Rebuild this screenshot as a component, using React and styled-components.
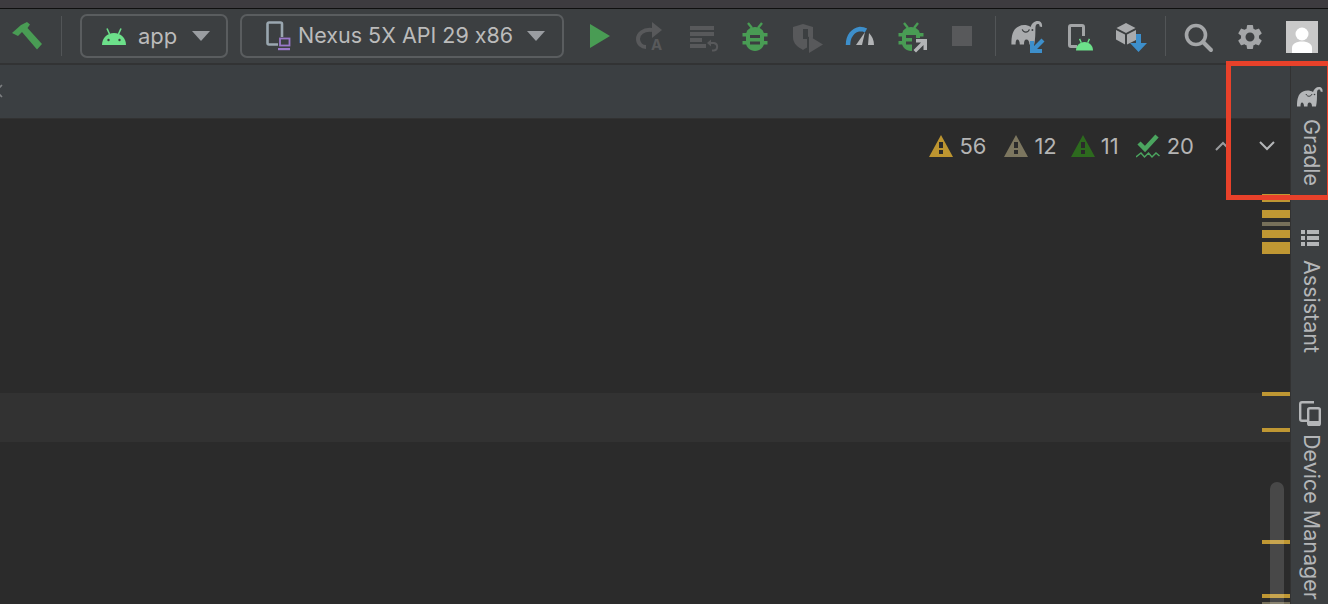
import React from 'react';
import styled, { createGlobalStyle } from 'styled-components';
import { MdSettings } from 'react-icons/md';

const GREEN = '#499c54';
const DIM = '#58595b';
const GREY = '#a0a2a4';
const BLUE = '#3d8fcb';
const DROID = '#6ce08a';

const GlobalStyle = createGlobalStyle`
  html, body {
    margin: 0;
    padding: 0;
    height: 100%;
    overflow: hidden;
    background: #2b2b2b;
  }
`;

const Page = styled.div`
  width: 1328px;
  height: 604px;
  position: relative;
  overflow: hidden;
  display: flex;
  flex-direction: column;
  font-family: Inter, 'Liberation Sans', sans-serif;
  font-feature-settings: 'calt' 0;
  color: #bbbbbb;
`;

const TitleStrip = styled.div`
  height: 8px;
  background: #3d3b3f;
  border-bottom: 1px solid #0f0f0f;
  flex: none;
`;

const Toolbar = styled.div`
  height: 54px;
  flex: none;
  display: flex;
  align-items: center;
  padding-left: 12px;
  background: #3c3f41;
  border-bottom: 2px solid #323334;
`;

const Sep = styled.div`
  width: 1px;
  height: 40px;
  margin-left: ${p => p.$ml}px;
  background: #525557;
`;

const Combo = styled.div`
  width: ${p => p.$w}px;
  height: 44px;
  margin-left: ${p => p.$ml}px;
  box-sizing: border-box;
  display: flex;
  align-items: center;
  padding-left: ${p => p.$pl}px;
  border: 2px solid #5a5d5f;
  border-radius: 7px;
  font-size: ${p => p.$fs}px;
  line-height: 1;
`;

const ComboText = styled.span`
  margin-left: ${p => p.$ml}px;
  white-space: nowrap;
`;

const Caret = styled.div`
  margin-left: ${p => p.$ml}px;
  width: 0;
  height: 0;
  border-left: 9px solid transparent;
  border-right: 9px solid transparent;
  border-top: 10px solid #9a9da1;
`;

const IconGroup = styled.div`
  display: flex;
  margin-left: ${p => p.$ml}px;
`;

const Slot = styled.div`
  width: 52px;
  height: 32px;
  margin-top: 2px;
  display: flex;
  align-items: center;
  justify-content: center;
  color: ${GREY};
`;

const Avatar = styled.div`
  width: 32px;
  height: 32px;
  margin-left: 10px;
  margin-top: 2px;
  background: #c9c9c9;
  overflow: hidden;
`;

const Body = styled.div`
  flex: 1;
  display: flex;
  min-height: 0;
`;

const Main = styled.div`
  flex: 1;
  display: flex;
  flex-direction: column;
  min-width: 0;
`;

const TabBar = styled.div`
  height: 53px;
  flex: none;
  display: flex;
  align-items: center;
  background: #3b3f42;
  border-bottom: 1px solid #323232;
`;

const TabClose = styled.svg`
  margin-left: -11px;
  margin-top: -2px;
`;

const Editor = styled.div`
  flex: 1;
  position: relative;
  background: #2b2b2b;
  overflow: hidden;
`;

const InspectionBar = styled.div`
  height: 54px;
  display: flex;
  align-items: center;
  justify-content: flex-end;
  padding-right: 14px;
  font-size: 22px;
  line-height: 1;
  color: #b4b4b4;
`;

const Problem = styled.div`
  display: flex;
  align-items: center;
  gap: ${p => p.$gap || 6}px;
  margin-right: ${p => p.$mr}px;
`;

const Chevron = styled.svg`
  margin-right: ${p => p.$mr || 0}px;
`;

const CurrentLine = styled.div`
  margin-top: 220px;
  height: 49px;
  background: #323232;
`;

const Stripe = styled.div`
  position: absolute;
  top: 0;
  right: 0;
  bottom: 0;
  width: 28px;
`;

const Mark = styled.div`
  position: absolute;
  left: 0;
  right: 0;
  top: ${p => p.$top}px;
  height: ${p => p.$h}px;
  background: ${p => (p.$weak ? '#77705a' : '#bf9733')};
`;

const Thumb = styled.div`
  position: absolute;
  left: 8px;
  top: 363px;
  bottom: -10px;
  width: 14px;
  border-radius: 7px;
  background: rgba(255, 255, 255, 0.14);
`;

const Rail = styled.div`
  width: 37px;
  flex: none;
  box-sizing: content-box;
  display: flex;
  flex-direction: column;
  align-items: center;
  padding-top: 22px;
  background: #3c3f41;
  border-left: 1px solid #323232;
  color: #b4b6b8;
`;

const RailTab = styled.div`
  display: flex;
  flex-direction: column;
  align-items: center;
  gap: ${p => p.$gap}px;
  margin-bottom: ${p => p.$mb}px;
`;

const RailText = styled.span`
  writing-mode: vertical-rl;
  font-size: 21.5px;
  line-height: 1;
  white-space: nowrap;
  margin-left: 3px;
`;

const Highlight = styled.div`
  position: absolute;
  left: 1226px;
  top: 61px;
  right: 0;
  height: 139px;
  box-sizing: border-box;
  border: 5px solid #e8412a;
  border-right-width: 1px;
  pointer-events: none;
`;

const ELEPHANT = 'M0 19.500C0 12 1 7 6 4.500 9 3 13 3 16 5c1-3 3-5 6-5 2.500 0 4 2 3.500 5l-2-.5c0-1.500-.5-2-1.500-2-1.500 0-2 1.500-2 4 0 3.500 0 8.500-1 13h-4c0-2.500-1-4-2.500-4s-2 1.500-2 4H7c0-2.500-1-4-2-4s-1.500 1.500-1.500 4z';

const Elephant = ({ fill, bg, ...rest }) => (
  <svg viewBox="0 0 26 20" {...rest}>
    <path d={ELEPHANT} fill={fill} />
    <path d="M9 7c1 3 5 3 6 0" fill="none" stroke={bg} strokeWidth="1" />
    <circle cx="17.500" cy="7.500" r="0.800" fill={bg} />
  </svg>
);

const Hammer = () => (
  <svg width="30" height="28" viewBox="0 0 30 28">
    <path d="M0 11 L9 3 L15 0 L18 2.500 L15.500 6 L30 22 L25 27.500 L10 10 L6 14 Z" fill={GREEN} />
  </svg>
);

const AndroidHead = () => (
  <svg width="24" height="17" viewBox="0 0 24 17">
    <path d="M0 17C0 10 5 5 12 5s12 5 12 12z" fill={DROID} />
    <path d="M5 .5 7.500 6M19 .5 16.500 6" stroke={DROID} strokeWidth="1.600" />
    <circle cx="6.500" cy="12" r="1.200" fill="#3c3f41" />
    <circle cx="17.500" cy="12" r="1.200" fill="#3c3f41" />
  </svg>
);

const DeviceIcon = () => (
  <svg width="26" height="30" viewBox="0 0 26 30">
    <path d="M3 1.500h11.500a1.500 1.500 0 0 1 1.500 1.500v13M12 23.500H3A1.500 1.500 0 0 1 1.500 22V3A1.500 1.500 0 0 1 3 1.500" fill="none" stroke="#9aa7b0" strokeWidth="2.600" />
    <rect x="14" y="17.500" width="9.500" height="7" fill="none" stroke="#9a78c9" strokeWidth="1.800" />
    <rect x="12" y="27" width="12" height="2.200" fill="#9a78c9" />
  </svg>
);

const PlayIcon = () => (
  <svg width="32" height="32" viewBox="0 0 32 32">
    <path d="M6 3 L26 15 L6 27 Z" fill={GREEN} />
  </svg>
);

const RerunIcon = () => (
  <svg width="32" height="32" viewBox="0 0 32 32">
    <path d="M16 9C7 8 2 13 2 18c0 5 4 8 8 8" fill="none" stroke={DIM} strokeWidth="4" />
    <path d="M16 1 26 9 16 17z" fill={DIM} />
    <text x="15" y="29" fontSize="15" fontWeight="700" fontFamily="Inter, sans-serif" fill={DIM}>A</text>
  </svg>
);

const RerunFailedIcon = () => (
  <svg width="32" height="32" viewBox="0 0 32 32">
    <path d="M2 5h24v4H2zM2 11h24v4H2zM2 17h12v4H2zM2 23h16v4H2z" fill={DIM} />
    <path d="M21 22h5a3.800 3.800 0 0 1 0 7.500h-2" fill="none" stroke={DIM} strokeWidth="2" />
    <path d="M23 18.500v7l-4-3.500z" fill={DIM} />
  </svg>
);

const Bug = ({ color = GREEN }) => (
  <g>
    <path d="M9 2l4 5M23 2l-4 5" stroke={color} strokeWidth="2.400" />
    <path d="M16 6c5 0 9 3 9 8v8c0 4-4 8-9 8s-9-4-9-8v-8c0-5 4-8 9-8z" fill={color} />
    <path d="M3.500 12h25v3.500h-25zM3.500 20h25v3.500h-25z" fill={color} />
    <path d="M11 14h10v3H11zM11 20.500h10v3H11z" fill="#3c3f41" />
  </g>
);

const DebugIcon = () => (
  <svg width="32" height="32" viewBox="0 0 32 32">
    <g transform="translate(-1 0)"><Bug /></g>
  </svg>
);

const CoverageIcon = () => (
  <svg width="32" height="32" viewBox="0 0 32 32">
    <path d="M1 6l10-3 10 3v10c0 7-5 10-10 13C6 26 1 23 1 16z" fill={DIM} />
    <path d="M11 8h5v10h-5z" fill="#3c3f41" />
    <path d="M15 15l16 9-16 8z" fill="#3c3f41" />
    <path d="M17 15l14 8.500L17 32z" fill={DIM} />
  </svg>
);

const ProfilerIcon = () => (
  <svg width="32" height="32" viewBox="0 0 32 32">
    <path d="M4 24C4 15 9 9 16 8c2 0 4 .3 6 1.500" fill="none" stroke={BLUE} strokeWidth="4.500" />
    <path d="M25 12c3 3 5 7 5 12h-6z" fill="#b2b4b6" />
    <path d="M12 24l9-13-3 13z" fill="#b2b4b6" />
  </svg>
);

const AttachIcon = () => (
  <svg width="32" height="32" viewBox="0 0 32 32">
    <g transform="translate(-1 0)"><Bug /></g>
    <path d="M16 17h16v16H16z" fill="#3c3f41" />
    <path d="M20 18h11v11h-3.500v-5L20 31.500 17.500 29l7.500-7.500h-5z" fill="#b2b4b6" />
  </svg>
);

const StopIcon = () => (
  <svg width="32" height="32" viewBox="0 0 32 32">
    <rect x="4" y="5" width="20" height="20" fill={DIM} />
  </svg>
);

const SyncWrap = styled.div`
  position: relative;
  width: 34px;
  height: 32px;
`;

const SyncArrow = styled.svg`
  position: absolute;
  right: 0;
  bottom: 0;
`;

const GradleSyncIcon = () => (
  <SyncWrap>
    <Elephant fill="#a9abad" bg="#3c3f41" width="32" height="24" />
    <SyncArrow width="15" height="15" viewBox="0 0 15 15">
      <path d="M14.500 3.500 11.500.5 4 8V3H0v12h12v-4H7z" fill={BLUE} />
    </SyncArrow>
  </SyncWrap>
);

const DeviceDroidIcon = () => (
  <svg width="28" height="32" viewBox="0 0 28 32">
    <path d="M5 4.500h11a1.500 1.500 0 0 1 1.500 1.500v9M11 25.500H5A1.500 1.500 0 0 1 3.500 24V6A1.500 1.500 0 0 1 5 4.500" fill="none" stroke="#a2a4a6" strokeWidth="3" />
    <svg x="10" y="17" width="17" height="13" viewBox="0 0 24 17">
      <path d="M0 17C0 10 5 5 12 5s12 5 12 12z" fill={DROID} />
      <path d="M5 .5 7.500 6M19 .5 16.500 6" stroke={DROID} strokeWidth="2" />
    </svg>
  </svg>
);

const SdkIcon = () => (
  <svg width="34" height="32" viewBox="0 0 34 32">
    <path d="M11 2l9.500 5-9.500 5-9.500-5z" fill="#a9abad" />
    <path d="M1 9l9 4.500v10L1 18.500zM12 13.500 21 9v10l-9 4.500z" fill="#a9abad" />
    <path d="M21 13h5v9h6l-8.500 9-8.500-9h6z" fill={BLUE} />
  </svg>
);

const SearchIcon = () => (
  <svg width="32" height="32" viewBox="0 0 32 32">
    <circle cx="14" cy="14" r="9.500" fill="none" stroke="#a4a6a8" strokeWidth="3.600" />
    <path d="M21 21l8 8" stroke="#a4a6a8" strokeWidth="4" strokeLinecap="round" />
  </svg>
);

const AvatarFace = () => (
  <svg width="32" height="32" viewBox="0 0 32 32">
    <circle cx="16" cy="13" r="6.500" fill="#fff" />
    <path d="M6 32v-5c0-4 4-6.500 10-6.500s10 2.500 10 6.500v5z" fill="#fff" />
  </svg>
);

const Warning = ({ color }) => (
  <svg width="24" height="22" viewBox="0 0 24 22">
    <path d="M12 0l12 22H0z" fill={color} />
    <path d="M10 7h4v6h-4zM10 15h4v4h-4z" fill="#2b2b2b" />
  </svg>
);

const CheckWave = () => (
  <svg width="24" height="26" viewBox="0 0 24 26">
    <path d="M3 10l6 6L21 3" fill="none" stroke="#4ba55f" strokeWidth="4.500" />
    <path d="M0 24l5-4 3.500 4 4-4 3.500 4 4-4 3.500 3" fill="none" stroke="#4ba55f" strokeWidth="1.500" />
  </svg>
);

const RailListIcon = () => (
  <svg width="18" height="16" viewBox="0 0 18 16">
    <path d="M0 0h4v4H0zM6 0h12v4H6zM0 6h4v4H0zM6 6h12v4H6zM0 12h4v4H0zM6 12h12v4H6z" fill="#b4b6b8" />
  </svg>
);

const RailDeviceIcon = () => (
  <svg width="22" height="25" viewBox="0 0 22 25">
    <path d="M15 1.200H3A1.800 1.800 0 0 0 1.200 3v15A1.800 1.800 0 0 0 3 19.800h5" fill="none" stroke="#b4b6b8" strokeWidth="2.400" />
    <rect x="9.200" y="7.200" width="11.600" height="17" rx="1.600" fill="#3c3f41" stroke="#b4b6b8" strokeWidth="2.400" />
    <path d="M9 20h12v4H9z" fill="#b4b6b8" />
  </svg>
);

const MARKS = [
  { top: 75, h: 8 },
  { top: 91, h: 8 },
  { top: 103, h: 4, weak: true },
  { top: 111, h: 8 },
  { top: 123, h: 12 },
  { top: 273, h: 4 },
  { top: 309, h: 4 },
  { top: 421, h: 4 },
  { top: 475, h: 4 },
  { top: 483, h: 4, weak: true },
];

const App = () => {
  return (
    <>
      <GlobalStyle />
      <Page>
        <TitleStrip />
        <Toolbar>
          <Hammer />
          <Sep $ml={19} />
          <Combo $ml={18} $w={148} $pl={20} $fs={22}>
            <AndroidHead />
            <ComboText $ml={12}>app</ComboText>
            <Caret $ml={15} />
          </Combo>
          <Combo $ml={12} $w={324} $pl={24} $fs={21.5}>
            <DeviceIcon />
            <ComboText $ml={6}>Nexus 5X API 29 x86</ComboText>
            <Caret $ml={14} />
          </Combo>
          <IconGroup $ml={10}>
            <Slot><PlayIcon /></Slot>
            <Slot><RerunIcon /></Slot>
            <Slot><RerunFailedIcon /></Slot>
            <Slot><DebugIcon /></Slot>
            <Slot><CoverageIcon /></Slot>
            <Slot><ProfilerIcon /></Slot>
            <Slot><AttachIcon /></Slot>
            <Slot><StopIcon /></Slot>
          </IconGroup>
          <Sep $ml={5} />
          <IconGroup $ml={6}>
            <Slot><GradleSyncIcon /></Slot>
            <Slot><DeviceDroidIcon /></Slot>
            <Slot><SdkIcon /></Slot>
          </IconGroup>
          <Sep $ml={7} />
          <IconGroup $ml={6}>
            <Slot><SearchIcon /></Slot>
            <Slot><MdSettings size={30} color="#a4a6a8" /></Slot>
          </IconGroup>
          <Avatar><AvatarFace /></Avatar>
        </Toolbar>
        <Body>
          <Main>
            <TabBar>
              <TabClose width="14" height="14" viewBox="0 0 14 14">
                <path d="M1 1l12 12M13 1L1 13" stroke="#7c7e80" strokeWidth="1.600" />
              </TabClose>
            </TabBar>
            <Editor>
              <InspectionBar>
                <Problem $mr={18}><Warning color="#bd9530" />56</Problem>
                <Problem $mr={14}><Warning color="#7c765f" />12</Problem>
                <Problem $mr={17}><Warning color="#2d6a1e" />11</Problem>
                <Problem $mr={20} $gap={7}><CheckWave />20</Problem>
                <Chevron $mr={26} width="18" height="10" viewBox="0 0 18 10">
                  <path d="M2 9l7-7 7 7" fill="none" stroke="#9a9c9e" strokeWidth="2" />
                </Chevron>
                <Chevron width="18" height="10" viewBox="0 0 18 10">
                  <path d="M2 1l7 7 7-7" fill="none" stroke="#b4b6b8" strokeWidth="2" />
                </Chevron>
              </InspectionBar>
              <CurrentLine />
              <Stripe>
                {MARKS.map(m => (
                  <Mark key={m.top} $top={m.top} $h={m.h} $weak={m.weak} />
                ))}
                <Thumb />
              </Stripe>
            </Editor>
          </Main>
          <Rail>
            <RailTab $gap={12} $mb={44}>
              <Elephant fill="#b4b6b8" bg="#3c3f41" width="26" height="20" />
              <RailText>Gradle</RailText>
            </RailTab>
            <RailTab $gap={14} $mb={48}>
              <RailListIcon />
              <RailText>Assistant</RailText>
            </RailTab>
            <RailTab $gap={8} $mb={0}>
              <RailDeviceIcon />
              <RailText>Device Manager</RailText>
            </RailTab>
          </Rail>
        </Body>
        <Highlight />
      </Page>
    </>
  );
};

export default App;
